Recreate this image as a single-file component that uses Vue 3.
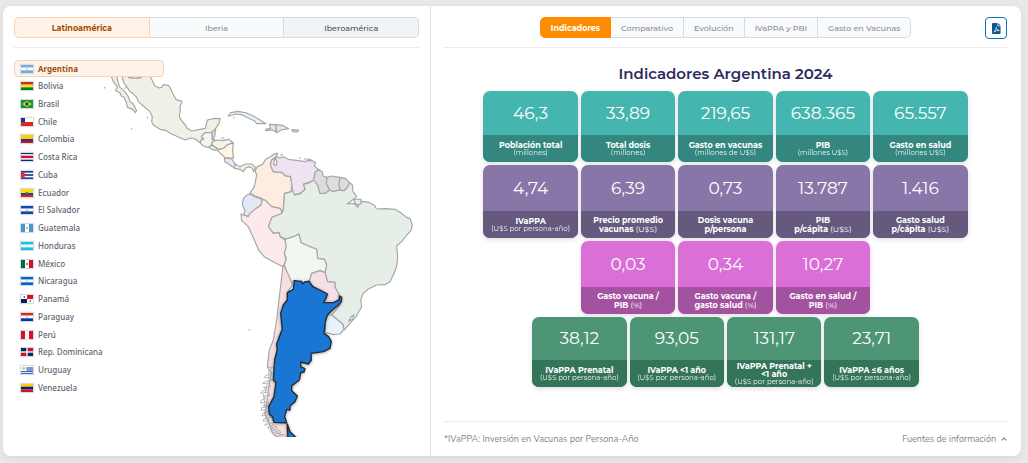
<script setup>
import { ref } from 'vue'

const region = ref('Latinoamérica')
const regions = ['Latinoamérica', 'Iberia', 'Iberoamérica']

const view = ref('Indicadores')
const views = ['Indicadores', 'Comparativo', 'Evolución', 'IVaPPA y PBI', 'Gasto en Vacunas']

const selected = ref('Argentina')

// Flags are built from [x, y, width, height, colour] bands on an 18 x 12 field.
const h3 = (a, b, c) => [[0, 0, 18, 4, a], [0, 4, 18, 4, b], [0, 8, 18, 4, c]]
const v3 = (a, b, c) => [[0, 0, 6, 12, a], [6, 0, 6, 12, b], [12, 0, 6, 12, c]]
const countries = [
  { name: 'Argentina', bands: h3('#74acdf', '#fff', '#74acdf'), dot: '#e8b03a' },
  { name: 'Bolivia', bands: h3('#d52b1e', '#f9e300', '#007934') },
  { name: 'Brasil', bands: [[0, 0, 18, 12, '#12973b']], shape: 'M9 1.5 16 6 9 10.5 2 6Z', shapeFill: '#f6dc1a', dot: '#21366f', r: 2.6 },
  { name: 'Chile', bands: [[0, 0, 18, 6, '#fff'], [0, 6, 18, 6, '#d52b1e'], [0, 0, 6, 6, '#0b3d91']] },
  { name: 'Colombia', bands: [[0, 0, 18, 6, '#ffcd00'], [0, 6, 18, 3, '#1b3a8a'], [0, 9, 18, 3, '#c8102e']] },
  { name: 'Costa Rica', bands: [[0, 0, 18, 2, '#002b7f'], [0, 2, 18, 2, '#fff'], [0, 4, 18, 4, '#ce1126'], [0, 8, 18, 2, '#fff'], [0, 10, 18, 2, '#002b7f']] },
  { name: 'Cuba', bands: [[0, 0, 18, 12, '#1d3f94'], [0, 2.5, 18, 2.2, '#fff'], [0, 7.3, 18, 2.2, '#fff']], shape: 'M0 0 9 6 0 12Z', shapeFill: '#d6303d' },
  { name: 'Ecuador', bands: [[0, 0, 18, 6, '#ffdd00'], [0, 6, 18, 3, '#034ea2'], [0, 9, 18, 3, '#ed1c24']], dot: '#7a7340', r: 2 },
  { name: 'El Salvador', bands: h3('#0f47af', '#fff', '#0f47af'), dot: '#8fb59a' },
  { name: 'Guatemala', bands: v3('#4997d0', '#fff', '#4997d0'), dot: '#a9b98a', r: 1.6 },
  { name: 'Honduras', bands: h3('#18c3df', '#fff', '#18c3df'), dot: '#9bdfea', r: 1 },
  { name: 'México', bands: v3('#006847', '#fff', '#ce1126'), dot: '#8c7a52', r: 1.6 },
  { name: 'Nicaragua', bands: h3('#0067c6', '#fff', '#0067c6'), dot: '#a9c9b8' },
  { name: 'Panamá', bands: [[0, 0, 18, 12, '#fff'], [9, 0, 9, 6, '#da121a'], [0, 6, 9, 6, '#072357'], [4, 2, 2, 2, '#072357'], [13, 8, 2, 2, '#da121a']] },
  { name: 'Paraguay', bands: h3('#d52b1e', '#fff', '#0038a8'), dot: '#a9b0a0' },
  { name: 'Perú', bands: v3('#d91023', '#fff', '#d91023') },
  { name: 'Rep. Dominicana', bands: [[0, 0, 18, 12, '#fff'], [0, 0, 8, 5, '#002d62'], [10, 0, 8, 5, '#ce1126'], [0, 7, 8, 5, '#ce1126'], [10, 7, 8, 5, '#002d62']] },
  { name: 'Uruguay', bands: [[0, 0, 18, 12, '#fff'], [8, 2, 10, 2, '#3e6cc0'], [8, 5, 10, 2, '#3e6cc0'], [0, 7.5, 18, 1.7, '#3e6cc0'], [0, 10.4, 18, 1.6, '#3e6cc0'], [2, 2, 4, 3, '#e0b040']] },
  { name: 'Venezuela', bands: h3('#ffcc00', '#00247d', '#cf142b') },
]

const rows = [
  { tone: 'teal', cards: [
    { value: '46,3', label: ['Población total'], unit: '(millones)' },
    { value: '33,89', label: ['Total dosis'], unit: '(millones)' },
    { value: '219,65', label: ['Gasto en vacunas'], unit: '(millones de U$S)' },
    { value: '638.365', label: ['PIB'], unit: '(millones U$S)' },
    { value: '65.557', label: ['Gasto en salud'], unit: '(millones U$S)' },
  ] },
  { tone: 'violet', cards: [
    { value: '4,74', label: ['IVaPPA'], unit: '(U$S por persona-año)' },
    { value: '6,39', label: ['Precio promedio', 'vacunas'], inline: '(U$S)' },
    { value: '0,73', label: ['Dosis vacuna', 'p/persona'] },
    { value: '13.787', label: ['PIB', 'p/cápita'], inline: '(U$S)' },
    { value: '1.416', label: ['Gasto salud', 'p/cápita'], inline: '(U$S)' },
  ] },
  { tone: 'pink', cards: [
    { value: '0,03', label: ['Gasto vacuna /', 'PIB'], inline: '(%)' },
    { value: '0,34', label: ['Gasto vacuna /', 'gasto salud'], inline: '(%)' },
    { value: '10,27', label: ['Gasto en salud /', 'PIB'], inline: '(%)' },
  ] },
  { tone: 'green', cards: [
    { value: '38,12', label: ['IVaPPA Prenatal'], unit: '(U$S por persona-año)' },
    { value: '93,05', label: ['IVaPPA <1 año'], unit: '(U$S por persona-año)' },
    { value: '131,17', label: ['IVaPPA Prenatal +', '<1 año'], unit: '(U$S por persona-año)' },
    { value: '23,71', label: ['IVaPPA ≤6 años'], unit: '(U$S por persona-año)' },
  ] },
]
</script>

<template>
  <main class="card">
    <section class="left">
      <header class="bar">
        <nav class="tabs regions">
          <button v-for="r in regions" :key="r" type="button" class="tab" :class="{ soft: r === region, dark: r === 'Iberoamérica' }" @click="region = r">{{ r }}</button>
        </nav>
      </header>
      <div class="explorer">
        <svg class="map" viewBox="14 60 405 377" role="img" aria-label="Mapa de Latinoamérica">
          <g class="land" transform="translate(100 60) scale(.33333)">
            <path fill="#eff0e6" d="M66 48 72 70 80 80 90 95 98 100 110 112 115 125 130 138 150 155 157 170 155 185 160 195 180 208 197 211 210 220 240 233 255 240 272 234 285 237 300 248 302 241 312 237 304 231 314 218 335 218 345 208 357 190 361 176 345 175 322 180 316 205 300 208 275 213 262 205 256 195 245 182 238 170 241 150 240 140 246 124 228 118 218 100 211 84 205 76 190 74 185 82 178 84 165 78 150 48Z" />
            <path fill="#eff0e6" d="M33 48 42 68 52 80 47 92 60 98 64 108 72 112 80 130 82 142 98 148 106 158 110 152 104 140 98 130 90 125 84 108 72 92 60 82 54 66 50 48Z" />
            <path d="M84 52Q105 57 126 52" />
            <path fill="#f2f8f1" d="M302 241 312 237 304 231 314 218 336 218 337 239 346 240 335 253 325 263 310 258 302 250Z" />
            <path fill="#ddd" d="M336 215 347 207 345 224 340 237 337 239Z" />
            <path fill="#e6f5ef" d="M325 262 336 256 350 264 348 271 336 268Z" />
            <path fill="#f8f5e4" d="M335 247 350 240 368 242 385 238 400 248 380 256 372 264 358 268 350 264 338 256Z" />
            <path fill="#fff6e3" d="M400 248 398 272 400 295 375 293 352 271 358 268 372 264 380 256Z" />
            <path fill="#deecfb" d="M373 294 395 297 405 312 404 325 385 311 375 306Z" />
            <path fill="#faefe2" d="M405 312 420 320 436 312 455 312 466 322 461 335 456 324 445 320 436 325 430 335 420 328 404 325Z" />
            <path fill="#e4f2fd" d="M384 168 392 158 415 154 440 159 460 168 480 180 498 191 470 191 463 182 440 172 425 164 405 162 390 168Z" />
            <path class="isle" d="M402 172v2M364 234h8M76 82v3M14 82v2M142 172v2M95 205v2" />
          </g>
          <g class="land" transform="translate(210 0) scale(.33333)">
            <path fill="#e7e7e7" d="M167 388 182 385 178 373 198 374 198 396 188 390 168 392Z" />
            <path fill="#e7e7e7" d="M198 374 218 376 236 386 214 390 200 398Z" />
            <path fill="#ddd" d="M246 389 266 390 263 396 248 395Z" />
          </g>
          <g class="land" transform="translate(225 130) scale(.33333)">
            <path fill="#e6efe7" d="M374 158 382 165 384 185 395 200 380 212 366 222 388 220 398 232 403 220 412 214 430 217 448 226 455 237 480 236 510 238 530 250 545 262 555 265 562 285 558 302 545 315 530 335 515 348 518 380 515 410 505 435 495 455 480 464 455 465 430 477 415 490 407 510 410 530 393 560 375 580 357 600 355 585 320 555 345 525 350 505 340 490 330 472 330 457 308 455 300 428 305 405 298 388 278 385 275 358 250 348 228 338 222 312 205 320 185 328 165 320 163 308 145 310 130 290 140 262 165 252 175 240 178 190 198 185 202 180 210 195 225 192 240 178 235 162 250 160 266 150 278 165 285 190 300 190 314 180 322 184 346 180 356 182 365 175Z" />
            <path fill="#e6efe7" d="M386 207 408 208 408 222 392 224Z" />
            <path fill="#fdecdf" d="M90 122 97 110 112 104 122 88 136 80 150 71 158 70 154 79 140 90 136 105 145 125 172 128 180 137 197 140 201 160 198 185 178 190 175 232 172 248 165 235 140 230 120 212 108 204 90 198 75 190 88 170 92 150 95 135Z" />
            <path fill="#eee2f3" d="M140 90 155 80 165 84 175 80 190 88 220 92 240 95 255 88 272 98 268 108 280 118 270 128 266 150 250 158 235 162 240 178 225 190 208 194 202 178 197 140 180 137 172 128 145 125 136 105Z" />
            <path fill="#fff" d="M150 82 156 96 153 106 146 104Z" />
            <path fill="#ddd" d="M280 118 292 125 294 138 306 142 304 160 314 180 300 190 285 190 278 165 266 150 270 128Z" />
            <path fill="#ddd" d="M306 142 320 138 345 142 342 165 346 180 322 184 314 180 304 160Z" />
            <path fill="#ddd" d="M345 142 362 146 374 158 365 175 356 182 346 180 342 165Z" />
            <path fill="#e2e9f5" d="M75 192 90 200 112 208 108 225 90 238 75 250 70 260 56 255 60 240 52 225 55 205 66 195Z" />
            <path fill="#fce9ea" d="M112 208 120 210 140 230 165 235 172 248 165 252 140 262 130 290 145 310 163 308 165 320 180 330 184 350 178 370 183 390 174 410 150 398 120 382 102 362 88 330 70 290 50 272 48 252 56 255 70 260 75 250 90 238 108 225Z" />
            <path fill="#f0f7f0" d="M180 328 205 320 222 312 228 338 250 348 275 358 278 385 298 388 305 405 300 428 285 422 260 430 254 450 235 462 205 452 198 466 190 440 178 405 184 385 178 370 184 350Z" />
            <path fill="#f5dfe8" d="M254 450 260 430 285 422 300 428 308 455 330 457 330 472 340 490 345 505 325 518 295 518 307 492 275 478 258 462Z" />
            <path class="isle" d="M168 76l4-3M222 84h4M238 87h12M250 92h10" />
          </g>
          <g class="land" transform="translate(240 270) scale(.33333)">
            <path fill="#f6dfe1" d="M129-12 133-12 148 20 158 45 145 62 145 90 125 130 128 175 115 200 112 240 104 270 102 310 108 335 105 380 88 410 88 432 102 457 140 460 142 502 112 502 98 490 92 474 84 450 74 430 80 400 84 370 90 330 94 310 82 290 88 240 100 210 110 150 118 80 124 30Z" />
            <path class="fjord" d="M84 292 98 292 90 300 98 312 78 316 72 322 92 324 96 332 76 334 68 340 88 342 92 350 70 352 82 358 66 364 62 370 84 366 90 376 72 378 78 386 64 390 62 400 82 394 86 402 70 406 88 410 66 412 64 422 80 418 84 426 68 430 66 438 84 434 92 442 72 446 70 454 90 450 78 460 74 466 96 458 100 466 82 472 88 478 108 468 112 476 92 482 98 490 118 480 122 488 104 494 110 500 130 492 136 498M70 372 74 400 78 424 76 440 88 462 106 484 128 498M86 304 88 330 80 346 76 370" />
            <path fill="#e8f2fc" d="M262 135 275 135 308 162 312 178 300 192 280 194 256 188 256 155Z" />
            <path fill="#fff" d="M326 154 334 140 342 134 338 148Z" />
            <g class="chosen">
              <path d="M163 32 185 34 188 42 194 36 207 34 218 50 240 60 262 72 258 85 250 98 280 98 298 90 298 78 305 82 304 95 294 106 280 118 262 135 256 155 252 190 266 200 274 215 270 235 250 245 213 250 214 270 205 282 182 276 182 290 195 296 192 306 182 308 178 330 155 348 155 362 172 378 165 395 150 408 150 420 140 418 134 440 140 458 102 457 98 440 88 432 86 410 102 380 108 338 100 330 104 270 112 240 110 222 117 205 127 178 122 130 130 105 142 90 142 68 160 58Z" />
              <path d="M142 462 144 510 176 510 150 485Z" />
            </g>
            <path class="isle" d="M28 178v2" />
          </g>
        </svg>
        <ul class="countries">
          <li v-for="c in countries" :key="c.name">
            <button type="button" class="country" :class="{ on: c.name === selected }" @click="selected = c.name">
              <svg class="flag" viewBox="0 0 18 12" preserveAspectRatio="none" aria-hidden="true">
                <rect v-for="(b, i) in c.bands" :key="i" :x="b[0]" :y="b[1]" :width="b[2]" :height="b[3]" :fill="b[4]" />
                <path v-if="c.shape" :d="c.shape" :fill="c.shapeFill" />
                <circle v-if="c.dot" cx="9" cy="6" :r="c.r || 1.3" :fill="c.dot" />
              </svg>
              <span>{{ c.name }}</span>
            </button>
          </li>
        </ul>
      </div>
    </section>

    <section class="right">
      <header class="bar views">
        <nav class="tabs">
          <button v-for="v in views" :key="v" type="button" class="tab" :class="{ solid: v === view }" @click="view = v">{{ v }}</button>
        </nav>
        <button type="button" class="pdf" aria-label="Descargar PDF">
          <svg viewBox="0 0 10 12" aria-hidden="true">
            <path fill="#0b568c" d="M1 0H6V3.5H9.5V11A1 1 0 0 1 8.500 12H1A1 1 0 0 1 0 11V1A1 1 0 0 1 1 0ZM6.800 0 9.500 2.700H6.800Z" />
            <path fill="none" stroke="#fff" stroke-width=".8" d="M2 10Q4.600 8 4.700 4.800 4.800 7.500 8.200 8.300 5 7.800 2 10Z" />
          </svg>
        </button>
      </header>
      <h1>Indicadores Argentina 2024</h1>
      <div class="board">
        <div v-for="row in rows" :key="row.tone" class="row" :class="row.tone">
          <article v-for="c in row.cards" :key="c.value" class="tile">
            <div class="value">{{ c.value }}</div>
            <div class="label" :class="{ wide: c.label.length > 1 && !c.unit }">
              <span v-for="(l, i) in c.label" :key="l"><b>{{ l }}</b>{{ c.inline && i === c.label.length - 1 ? ' ' + c.inline : '' }}</span>
              <small v-if="c.unit">{{ c.unit }}</small>
            </div>
          </article>
        </div>
      </div>
      <footer>
        <span>*IVaPPA: Inversión en Vacunas por Persona-Año</span>
        <button type="button" class="sources">
          Fuentes de información
          <svg viewBox="0 0 6 4" aria-hidden="true"><path d="M.7 3.300 3 1 5.300 3.300" fill="none" stroke="currentColor" stroke-width="1.200" /></svg>
        </button>
      </footer>
    </section>
  </main>
</template>

<style>
body {
  background: #e9e9e9;
}
</style>

<style scoped>
* {
  box-sizing: border-box;
}
.card {
  display: grid;
  grid-template-columns: 428fr 590fr;
  min-height: 450px;
  margin: 6px 7px 7px 3px;
  border-radius: 8px;
  background: #fff;
  box-shadow: 0 2px 8px #d3d6da;
  font-family: Montserrat, Inter, sans-serif;
  color: #666d78;
}
button {
  margin: 0;
  font: inherit;
  color: inherit;
  cursor: pointer;
}
.left {
  padding: 11px 11px 0;
  border-right: 1px solid #d9dde6;
}
.right {
  display: flex;
  flex-direction: column;
  padding: 11px 14px 0 13px;
}
.bar {
  height: 31px;
  border-bottom: 1px solid #ececee;
}
.tabs {
  display: flex;
  height: 21px;
}
.tab {
  padding: 0 10px;
  border: 1px solid #d5dbe5;
  border-left-width: 0;
  background: #f8fafc;
  font-size: 8px;
  font-weight: 500;
  color: #8a8c92;
  white-space: nowrap;
}
.tab:first-child {
  border-left-width: 1px;
  border-radius: 5px 0 0 5px;
}
.tab:last-child {
  border-radius: 0 5px 5px 0;
}
.regions .tab {
  flex: 1;
}
.tab.dark {
  background: #f1f3f5;
  color: #4a4f5a;
}
.tab.soft {
  border-color: #f6d3b3;
  background: #fff3e9;
  font-weight: 700;
  color: #a14f08;
}
.tab.solid {
  border-color: #ff8c00;
  background: #ff8c00;
  font-weight: 700;
  color: #fff;
}
.views {
  display: grid;
  grid-template-columns: 1fr auto 1fr;
}
.views .tabs {
  grid-column: 2;
}
.pdf {
  display: grid;
  place-items: center;
  justify-self: end;
  width: 22px;
  height: 22px;
  padding: 0;
  border: 1px solid #0a74b8;
  border-radius: 4px;
  background: #fff;
}
.pdf svg {
  width: 9px;
  height: 11px;
}
.explorer {
  display: grid;
  padding-top: 12px;
}
.map,
.countries {
  grid-area: 1 / 1;
}
.map {
  width: 100%;
}
.land {
  fill: none;
  stroke: #a6a6a6;
  stroke-width: 3.500;
  stroke-linejoin: round;
}
.isle {
  stroke-linecap: round;
}
.fjord {
  stroke: #aaa;
  stroke-width: 2.500;
}
.chosen {
  fill: #1976d2;
  stroke: #222b36;
  stroke-width: 4;
  filter: drop-shadow(0 2px 5px rgba(0, 0, 0, .4));
}
.countries {
  z-index: 1;
  display: grid;
  grid-auto-rows: 1fr;
  align-self: start;
  width: 150px;
  min-height: 337px;
  margin: 0;
  padding: 0;
  list-style: none;
}
.country {
  display: flex;
  align-items: center;
  gap: 5px;
  width: 100%;
  height: 17px;
  padding: 0 6px;
  border: 1px solid transparent;
  border-radius: 4px;
  background: none;
  font: 500 8px/12px "Noto Sans", sans-serif;
  color: #5f6671;
}
.country.on {
  border-color: #f6d3b3;
  background: #fff3e9;
  font-weight: 700;
  color: #a14f08;
}
.flag {
  width: 12px;
  height: 8px;
  box-shadow: 0 0 1px 1px #d9dce4;
}
h1 {
  margin: 17px 0 8px;
  font-size: 15px;
  line-height: 18px;
  font-weight: 600;
  text-align: center;
  color: #2a2a5c;
}
.board {
  display: flex;
  flex-direction: column;
  gap: 3px;
  width: 86%;
  margin: 0 auto;
}
.row {
  display: flex;
  justify-content: center;
  gap: 3px;
}
.tile {
  flex: 0 0 calc((100% - 12px) / 5);
  overflow: hidden;
  border-radius: 7px;
  background: var(--top);
  box-shadow: 0 2px 5px rgba(0, 0, 0, .12);
  color: #fff;
  text-align: center;
}
.value {
  font-size: 17px;
  line-height: var(--rise);
}
.label {
  display: flex;
  flex-direction: column;
  justify-content: center;
  height: 27px;
  background: var(--base);
  font-size: 8px;
  line-height: 8px;
  white-space: nowrap;
}
.label.wide {
  line-height: 9px;
}
.label b {
  font-weight: 700;
}
.label small {
  font-size: 7px;
  opacity: .9;
}
.teal {
  --top: #45b6af;
  --base: #33877f;
  --rise: 44px;
}
.violet {
  --top: #8976a9;
  --base: #66597e;
  --rise: 46px;
}
.pink {
  --top: #da6fd7;
  --base: #a2529f;
  --rise: 46px;
}
.green {
  --top: #4d9574;
  --base: #34755a;
  --rise: 43px;
}
footer {
  display: flex;
  align-items: center;
  justify-content: space-between;
  height: 35px;
  margin-top: auto;
  border-top: 1px solid #ececee;
  font: 9px/12px Nunito, "Open Sans", sans-serif;
  color: #80858f;
}
.sources {
  display: flex;
  align-items: center;
  gap: 5px;
  padding: 0;
  border: 0;
  background: none;
}
.sources svg {
  width: 6px;
  height: 4px;
}
</style>
